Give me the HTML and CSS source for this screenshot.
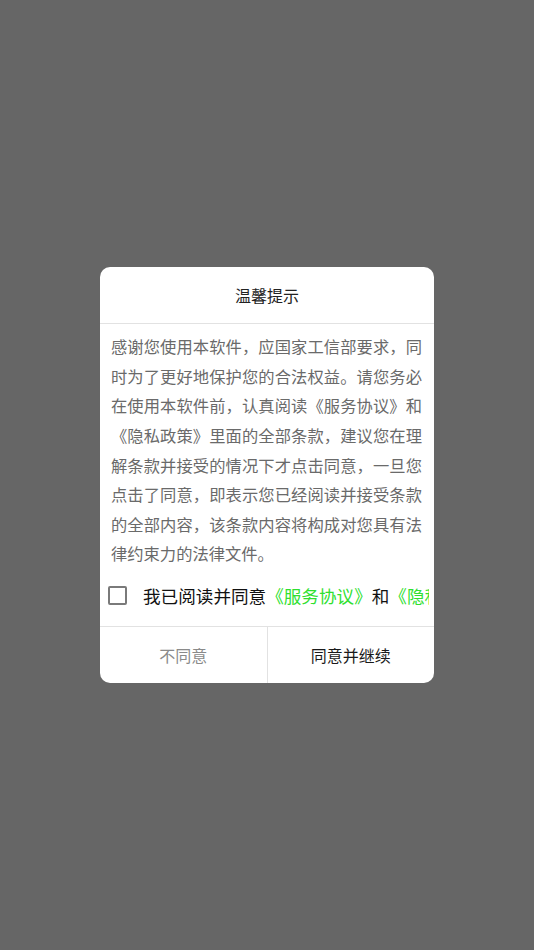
FILE: index.html
```html
<!DOCTYPE html>
<html lang="zh-CN">
<head>
<meta charset="utf-8">
<title>温馨提示</title>
<link rel="stylesheet" href="styles.css">
</head>
<body>
<div class="mask">
  <div class="dialog">
    <div class="title">温馨提示</div>
    <div class="content">感谢您使用本软件，应国家工信部要求，同时为了更好地保护您的合法权益。请您务必在使用本软件前，认真阅读《服务协议》和《隐私政策》里面的全部条款，建议您在理解条款并接受的情况下才点击同意，一旦您点击了同意，即表示您已经阅读并接受条款的全部内容，该条款内容将构成对您具有法律约束力的法律文件。</div>
    <div class="agree">
      <span class="check"></span>
      <span class="agree-text">我已阅读并同意<span class="link">《服务协议》</span>和<span class="link">《隐私政策》</span></span>
    </div>
    <div class="actions">
      <div class="btn btn-cancel">不同意</div>
      <div class="btn btn-ok">同意并继续</div>
    </div>
  </div>
</div>
</body>
</html>
```
FILE: styles.css
```css
html, body {
  margin: 0;
  padding: 0;
}
body {
  background: #666666;
  font-family: "Noto Sans CJK SC", "Noto Sans", sans-serif;
}
.mask {
  width: 534px;
  height: 950px;
  display: flex;
  align-items: center;
  justify-content: center;
}
.dialog {
  width: 334px;
  background: #ffffff;
  border-radius: 10px;
  overflow: hidden;
}
.title {
  height: 56px;
  display: flex;
  align-items: center;
  justify-content: center;
  font-size: 16px;
  color: #222222;
  border-bottom: 1px solid #e2e2e2;
}
.content {
  padding: 8px 12px 0 11px;
  font-size: 16.3px;
  line-height: 29.6px;
  color: #6a6a6a;
  text-align: justify;
}
.agree {
  display: flex;
  align-items: center;
  height: 30px;
  padding: 12px 5px 15px 8px;
  white-space: nowrap;
  overflow: hidden;
  border-bottom: 1px solid #e2e2e2;
}
.check {
  flex: none;
  width: 15px;
  height: 15px;
  border: 2px solid #7a7a7a;
  border-radius: 2px;
}
.agree-text {
  flex: 1;
  min-width: 0;
  overflow: hidden;
  margin-left: 16px;
  font-size: 17.6px;
  color: #111111;
}
.link {
  color: #2fe02f;
}
.actions {
  display: flex;
  height: 56px;
}
.btn {
  flex: 1;
  display: flex;
  align-items: center;
  justify-content: center;
  font-size: 16px;
}
.btn-cancel {
  color: #8a8a8a;
  border-right: 1px solid #e2e2e2;
}
.btn-ok {
  color: #1a1a1a;
}
```
